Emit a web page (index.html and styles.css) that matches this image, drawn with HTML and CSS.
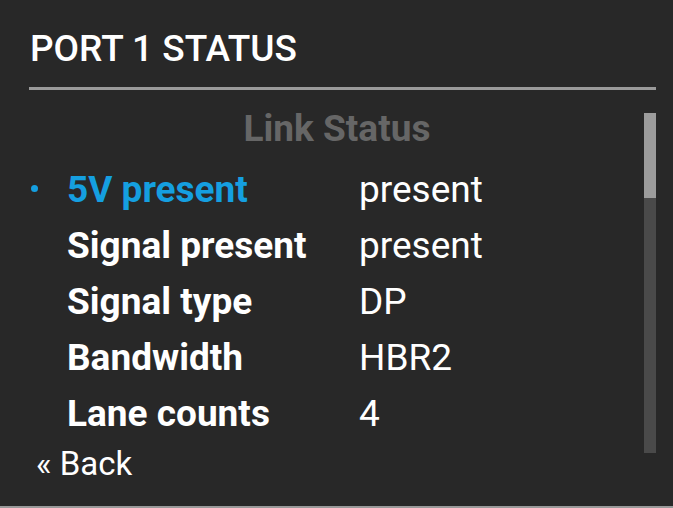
FILE: index.html
```html
<!DOCTYPE html>
<html lang="en">
<head>
    <meta charset="UTF-8">
    <meta name="viewport" content="width=device-width, initial-scale=1.0">
    <title>Port 1 Status</title>
    <link rel="stylesheet" href="styles.css">
</head>
<body>
    <div class="screen">
        <!-- Header -->
        <h1 class="title">PORT 1 STATUS</h1>
        <div class="rule"></div>

        <!-- Status list with scrollbar -->
        <div class="panel">
            <div class="list">
                <div class="section">Link Status</div>
                <div class="row active">
                    <span class="bullet"></span>
                    <span class="label">5V present</span>
                    <span class="value">present</span>
                </div>
                <div class="row">
                    <span class="bullet"></span>
                    <span class="label">Signal present</span>
                    <span class="value">present</span>
                </div>
                <div class="row">
                    <span class="bullet"></span>
                    <span class="label">Signal type</span>
                    <span class="value">DP</span>
                </div>
                <div class="row">
                    <span class="bullet"></span>
                    <span class="label">Bandwidth</span>
                    <span class="value">HBR2</span>
                </div>
                <div class="row">
                    <span class="bullet"></span>
                    <span class="label">Lane counts</span>
                    <span class="value">4</span>
                </div>
            </div>
            <div class="scrollbar">
                <div class="thumb"></div>
            </div>
        </div>

        <div class="back">&laquo; Back</div>
    </div>
</body>
</html>
```

FILE: styles.css
```css
/* General Styles */
body {
    margin: 0;
    padding: 0;
    background-color: #282828;
    color: #ffffff;
    font-family: Roboto, "Noto Sans", sans-serif;
}

.screen {
    height: 508px;
    padding: 27px 17px 0 30px;
    box-sizing: border-box;
    border-bottom: 2px solid #9a9a9a;
    overflow: hidden;
}

/* Header */
.title {
    margin: 0;
    font-size: 37px;
    font-weight: 500;
    line-height: 44px;
}

.rule {
    height: 3px;
    margin: 16px 0 0 -1px;
    background-color: #9a9a9a;
}

/* Panel */
.panel {
    display: flex;
    padding-top: 11px;
}

.list {
    flex: 1;
}

.section {
    margin-bottom: 5px;
    text-align: center;
    font-size: 37px;
    font-weight: 700;
    line-height: 56px;
    color: #666666;
}

.row {
    display: flex;
    align-items: center;
    height: 56px;
    font-size: 37px;
    line-height: 56px;
}

.bullet {
    width: 37px;
}

.row.active .bullet::before {
    content: "";
    display: block;
    width: 7px;
    height: 7px;
    margin: -4px 0 0 1px;
    border-radius: 50%;
    background-color: #159fe0;
}

.label {
    width: 292px;
    font-weight: 700;
}

.row.active .label {
    color: #159fe0;
}

.value {
    font-weight: 400;
}

.scrollbar {
    width: 12px;
    height: 340px;
    margin-top: 12px;
    background-color: #4a4a4a;
}

.thumb {
    height: 85px;
    background-color: #9c9c9c;
}

/* Back link */
.back {
    margin: -7px 0 0 6px;
    font-size: 33px;
    line-height: 36px;
}
```
